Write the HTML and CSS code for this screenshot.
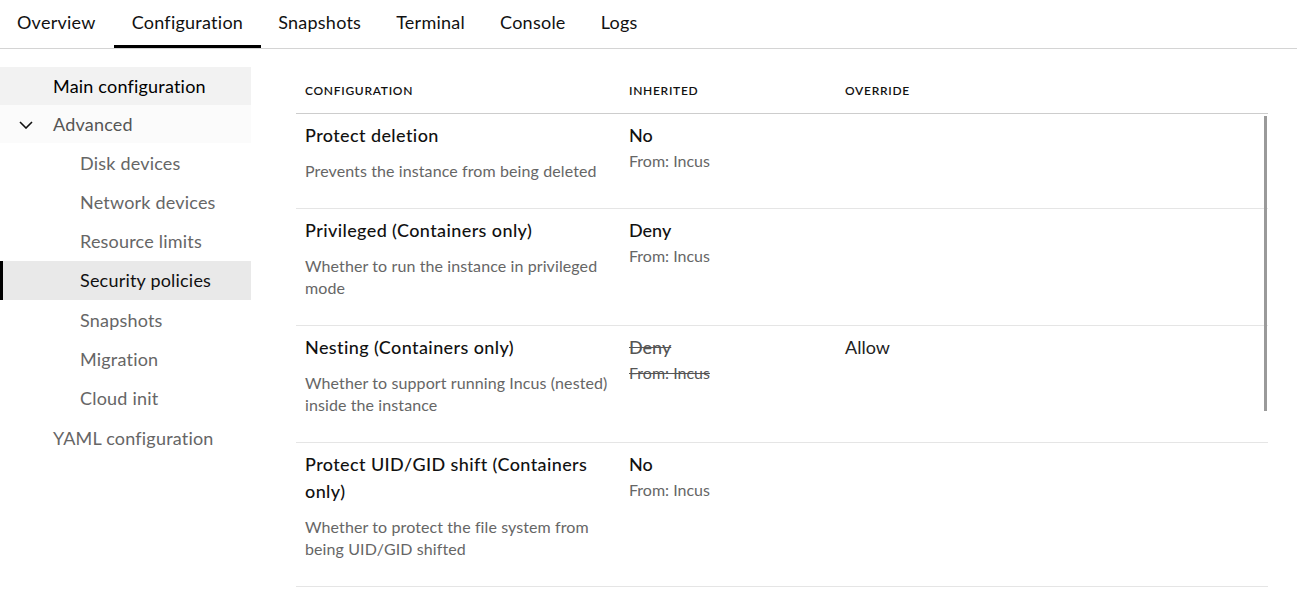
FILE: index.html
```html
<!DOCTYPE html>
<html>
<head>
<meta charset="utf-8">
<link rel="stylesheet" href="styles.css">
</head>
<body>
<nav class="tabs">
  <a class="tab">Overview</a>
  <a class="tab active">Configuration</a>
  <a class="tab">Snapshots</a>
  <a class="tab">Terminal</a>
  <a class="tab">Console</a>
  <a class="tab">Logs</a>
</nav>
<div class="main">
  <aside class="side">
    <div class="item top selected">Main configuration</div>
    <div class="item top group">
      <svg class="chev" width="14" height="8" viewBox="0 0 14 8"><path d="M1 1l6 6 6-6" fill="none" stroke="#111" stroke-width="1.6"/></svg>
      Advanced
    </div>
    <div class="item sub">Disk devices</div>
    <div class="item sub">Network devices</div>
    <div class="item sub">Resource limits</div>
    <div class="item sub active">Security policies</div>
    <div class="item sub">Snapshots</div>
    <div class="item sub">Migration</div>
    <div class="item sub">Cloud init</div>
    <div class="item top yaml">YAML configuration</div>
  </aside>
  <section class="content">
    <table class="cfg">
      <colgroup><col class="c1"><col class="c2"><col class="c3"></colgroup>
      <thead>
        <tr><th>Configuration</th><th>Inherited</th><th>Override</th></tr>
      </thead>
      <tbody>
        <tr>
          <td><div class="title">Protect deletion</div><div class="desc">Prevents the instance from being deleted</div></td>
          <td><div class="val">No</div><div class="from">From: Incus</div></td>
          <td></td>
        </tr>
        <tr>
          <td><div class="title">Privileged (Containers only)</div><div class="desc">Whether to run the instance in privileged mode</div></td>
          <td><div class="val">Deny</div><div class="from">From: Incus</div></td>
          <td></td>
        </tr>
        <tr>
          <td><div class="title">Nesting (Containers only)</div><div class="desc">Whether to support running Incus (nested) inside the instance</div></td>
          <td class="struck"><div class="val">Deny</div><div class="from">From: Incus</div></td>
          <td><div class="ovr">Allow</div></td>
        </tr>
        <tr>
          <td><div class="title">Protect UID/GID shift (Containers only)</div><div class="desc">Whether to protect the file system from being UID/GID shifted</div></td>
          <td><div class="val">No</div><div class="from">From: Incus</div></td>
          <td></td>
        </tr>
      </tbody>
    </table>
    <div class="scrollthumb"></div>
  </section>
</div>
</body>
</html>
```

FILE: styles.css
```css
* { box-sizing: border-box; }
html, body { margin: 0; padding: 0; background: #fff; }
body {
  font-family: "Lato", "Noto Sans", sans-serif;
  color: #000;
  overflow: hidden;
  height: 600px;
}
.tabs {
  display: flex;
  height: 49px;
  border-bottom: 1px solid #d4d4d4;
  padding-left: 0;
}
.tab {
  position: relative;
  display: block;
  padding: 0 18px 0 17px;
  height: 48px;
  line-height: 44px;
  font-size: 18px;
  letter-spacing: 0.25px;
  color: #111;
}
.tab.active { padding-left: 18px; }
.tab.active::after {
  content: "";
  position: absolute;
  left: 0; right: 0; bottom: 0;
  height: 3px;
  background: #000;
}
.main { display: flex; }
.side {
  width: 251px;
  flex: none;
  padding-top: 18px;
}
.item {
  display: flex;
  align-items: center;
  font-size: 18px;
  letter-spacing: 0.2px;
  color: #666;
  padding-left: 53px;
  position: relative;
}
.item.top { height: 38px; }
.item.sub { height: 39.25px; padding-left: 80px; }
.item.yaml { height: 40px; }
.item.selected { background: #f2f2f2; color: #000; }
.item.group { background: #fbfbfb; color: #555; }
.chev { position: absolute; left: 19px; top: 16px; }
.item.active {
  background: #e9e9e9;
  color: #111;
  border-left: 3px solid #000;
  padding-left: 77px;
}
.content {
  position: relative;
  margin-left: 45px;
  padding-top: 18px;
  width: 972px;
}
.cfg {
  width: 972px;
  border-collapse: collapse;
  table-layout: fixed;
}
.c1 { width: 324px; }
.c2 { width: 216px; }
.cfg th {
  text-align: left;
  text-transform: uppercase;
  font-size: 12px;
  font-weight: 600;
  letter-spacing: 0.7px;
  line-height: 16px;
  padding: 16px 9px 14px;
  border-bottom: 1px solid #cdcdcd;
  color: #111;
}
.cfg td {
  vertical-align: top;
  padding: 8px 12px 26px 9px;
  border-bottom: 1px solid #e5e5e5;
}
.title {
  font-size: 18px;
  line-height: 27px;
  font-weight: 500;
  letter-spacing: 0.4px;
  color: #111;
}
.desc {
  margin-top: 11px;
  font-size: 16px;
  line-height: 22px;
  letter-spacing: 0.1px;
  color: #666;
}
.val {
  font-size: 18px;
  line-height: 27px;
  font-weight: 500;
  color: #111;
}
.from {
  margin-top: 1px;
  font-size: 16px;
  line-height: 22px;
  color: #666;
}
.struck .val, .struck .from { text-decoration: line-through; color: #555; }
.ovr {
  font-size: 18px;
  line-height: 27px;
  color: #222;
}
.scrollthumb {
  position: absolute;
  left: 968px;
  top: 67px;
  width: 3px;
  height: 295px;
  background: #9a9a9a;
}
```
